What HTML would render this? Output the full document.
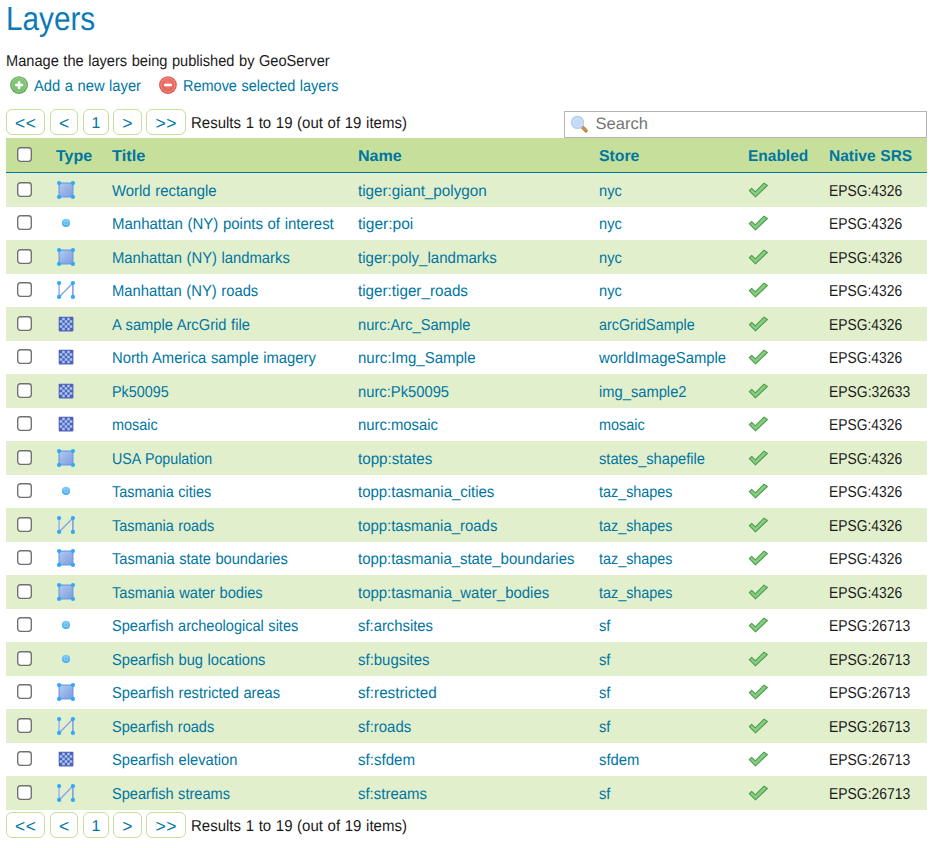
<!DOCTYPE html>
<html><head><meta charset="utf-8"><title>Layers</title>
<style>
html,body{margin:0;padding:0;background:#fff;}
body{width:938px;height:848px;position:relative;overflow:hidden;font-family:"Liberation Sans",sans-serif;font-size:15.8px;color:#222;text-rendering:geometricPrecision;}
.t{position:absolute;white-space:nowrap;line-height:20px;height:20px;transform-origin:0 50%;word-spacing:0.5px;}
.h1{font-size:33.3px;line-height:40px;height:40px;color:#0b7ab6;}
.lnk{color:#0076a1;}
.blk{color:#1a1a1a;}
.th{font-weight:bold;color:#0076a1;}
.bg{position:absolute;left:6px;width:921px;}
.hd{background:#c6e09b;top:138px;height:34px;}
.hl{background:#0076a1;top:172px;height:1px;}
.ev{background:#e2efcd;}
.cb{position:absolute;left:17px;width:15px;height:15px;}
.ic{position:absolute;overflow:visible;}
.pg{position:absolute;box-sizing:border-box;height:26px;border:1px solid #c6e09b;border-radius:6px;background:#fff;color:#0076a1;text-align:center;line-height:23px;font-size:15px;white-space:nowrap;}
.pg span{position:relative;display:inline-block;}
.pg .a1,.pg .a2{font-size:17.5px;top:1.7px;}
.pg .a2{letter-spacing:0.7px;left:0.35px;}
.pg .n{font-size:15.8px;top:1.6px;}
.sb{position:absolute;box-sizing:border-box;left:564px;top:111px;width:363px;height:27px;border:1px solid #b4b4b4;background:#fff;}
.ph{color:#757575;font-size:16.5px;word-spacing:0;}
</style></head><body>


<svg width="0" height="0" style="position:absolute">
 <defs>
  <linearGradient id="gpoly" x1="0" y1="0" x2="1" y2="1">
   <stop offset="0" stop-color="#b0cbef"/><stop offset="1" stop-color="#7c9ce0"/>
  </linearGradient>
  <linearGradient id="gpt" x1="0" y1="0" x2="0" y2="1">
   <stop offset="0" stop-color="#84cdf9"/><stop offset="0.5" stop-color="#56b7f5"/><stop offset="1" stop-color="#3ea9ef"/>
  </linearGradient>
  <radialGradient id="gadd" cx="0.5" cy="0.45" r="0.5">
   <stop offset="0" stop-color="#8fce86"/><stop offset="0.7" stop-color="#7cc070"/><stop offset="1" stop-color="#5aa850"/>
  </radialGradient>
  <radialGradient id="grem" cx="0.5" cy="0.45" r="0.5">
   <stop offset="0" stop-color="#f08078"/><stop offset="0.7" stop-color="#e8645a"/><stop offset="1" stop-color="#d8584e"/>
  </radialGradient>
  <g id="i-poly">
   <rect x="2.1" y="2.1" width="13.8" height="13.8" fill="url(#gpoly)" stroke="#7296de" stroke-width="1.2"/>
   <circle cx="2.1" cy="2.1" r="2.15" fill="#2faaf8"/><circle cx="15.9" cy="2.1" r="2.15" fill="#2faaf8"/>
   <circle cx="2.1" cy="15.9" r="2.15" fill="#2faaf8"/><circle cx="15.9" cy="15.9" r="2.15" fill="#2faaf8"/>
  </g>
  <g id="i-line">
   <path d="M2.1 2.1V15.9" fill="none" stroke="#9fb7ec" stroke-width="1.6"/><path d="M2.1 15.9L15.9 2.1" fill="none" stroke="#8aa5e6" stroke-width="1.45"/><path d="M15.9 2.1V15.9" fill="none" stroke="#819fe3" stroke-width="1.6"/>
   <circle cx="2.1" cy="2.1" r="2.15" fill="#2faaf8"/><circle cx="15.9" cy="2.1" r="2.15" fill="#2faaf8"/>
   <circle cx="2.1" cy="15.9" r="2.15" fill="#2faaf8"/><circle cx="15.9" cy="15.9" r="2.15" fill="#2faaf8"/>
  </g>
  <g id="i-point">
   <circle cx="9" cy="8.9" r="4.05" fill="url(#gpt)"/><rect x="7.2" y="7.1" width="3.6" height="3.6" rx="0.9" fill="#5fb8f5" stroke="#a3d7fb" stroke-width="0.8"/>
  </g>
  <g id="i-raster">
   <rect x="1.7" y="1.7" width="14.7" height="14.7" rx="0.8" fill="#4f61bb"/>
   <g fill="#a9c8f1">
    <rect x="5.25" y="2.75" width="2.5" height="2.5"/><rect x="10.25" y="2.75" width="2.5" height="2.5"/>
    <rect x="2.75" y="5.25" width="2.5" height="2.5"/><rect x="7.75" y="5.25" width="2.5" height="2.5"/><rect x="12.75" y="5.25" width="2.5" height="2.5"/>
    <rect x="5.25" y="7.75" width="2.5" height="2.5"/><rect x="10.25" y="7.75" width="2.5" height="2.5"/>
    <rect x="2.75" y="10.25" width="2.5" height="2.5"/><rect x="7.75" y="10.25" width="2.5" height="2.5"/><rect x="12.75" y="10.25" width="2.5" height="2.5"/>
    <rect x="5.25" y="12.75" width="2.5" height="2.5"/><rect x="10.25" y="12.75" width="2.5" height="2.5"/>
   </g>
  </g>
  <g id="i-check">
   <path d="M1.3 9.6L3.7 7.4L7.3 10.9L16 2.1L19.4 4.5L7.5 15.9Z" fill="#ffffff" opacity="0.5" transform="translate(0.5,0.8)"/>
   <path d="M1.3 9.6L3.7 7.4L7.3 10.9L16 2.1L19.4 4.5L7.5 15.9Z" fill="#82ca7e" stroke="#4d9d4a" stroke-width="1.05" stroke-linejoin="round"/>
   <path d="M3.6 9.4L7.4 13.1L16.6 3.9" fill="none" stroke="#93d48f" stroke-width="0.9" opacity="0.8"/>
  </g>
 </defs>
</svg>

<span class="t h1" style="left:6px;top:-0.5px;transform:scaleX(0.8924);">Layers</span>
<span class="t blk" style="left:5.6px;top:51.7px;transform:scaleX(0.9250);">Manage the layers being published by GeoServer</span>
<svg class="ic" style="left:10px;top:76px" width="18" height="18" viewBox="0 0 18 18"><circle cx="9.05" cy="9.05" r="8.9" fill="url(#gadd)"/><circle cx="9.05" cy="9.05" r="7" fill="none" stroke="#b3e0ac" stroke-width="0.8" opacity="0.75"/><path d="M9.1 6.2V12M6.2 9.1H12" stroke="#fff" stroke-width="2.5" stroke-linecap="round"/></svg>
<span class="t lnk" style="left:34.4px;top:76.6px;transform:scaleX(0.9323);">Add a new layer</span>
<svg class="ic" style="left:159px;top:76px" width="18" height="18" viewBox="0 0 18 18"><circle cx="8.95" cy="9.05" r="8.9" fill="url(#grem)"/><circle cx="8.95" cy="9.05" r="7" fill="none" stroke="#f8b8b0" stroke-width="0.8" opacity="0.75"/><path d="M6.1 9.1H11.9" stroke="#fff" stroke-width="2.5" stroke-linecap="round"/></svg>
<span class="t lnk" style="left:183px;top:76.6px;transform:scaleX(0.9168);">Remove selected layers</span>
<div class="pg" style="left:6px;top:109px;width:39px"><span class="a2">&lt;&lt;</span></div><div class="pg" style="left:50px;top:109px;width:28px"><span class="a1">&lt;</span></div><div class="pg" style="left:83px;top:109px;width:26px"><span class="n">1</span></div><div class="pg" style="left:113px;top:109px;width:28.5px"><span class="a1">&gt;</span></div><div class="pg" style="left:146px;top:109px;width:40px"><span class="a2">&gt;&gt;</span></div><span class="t blk" style="left:190.6px;top:114px;transform:scaleX(0.9495);">Results 1 to 19 (out of 19 items)</span>
<div class="sb"></div>
<svg class="ic" style="left:569px;top:114px" width="20" height="20" viewBox="0 0 20 20"><path d="M13.3 13.1L17 16.8" stroke="#b07a36" stroke-width="3.5" stroke-linecap="round"/><path d="M13.3 13.1L17 16.8" stroke="#cf9c60" stroke-width="1.6" stroke-linecap="round"/><circle cx="8.5" cy="8.45" r="6" fill="#c3d9f5" stroke="#b2ccf0" stroke-width="1.3"/><circle cx="8.5" cy="8.45" r="4.3" fill="none" stroke="#d6e6f9" stroke-width="0.9"/></svg>
<span class="t ph" style="left:595.6px;top:113.5px;">Search</span>
<div class="bg hd"></div><div class="bg hl"></div>
<svg class="cb" style="top:147px" viewBox="0 0 15 15"><rect x="0.7" y="0.7" width="13.6" height="13.6" rx="2.7" fill="#fff" stroke="#707070" stroke-width="1.35"/></svg>
<span class="t th" style="left:56px;top:146.8px;transform:scaleX(1.0139);">Type</span>
<span class="t th" style="left:112px;top:146.8px;transform:scaleX(1.0372);">Title</span>
<span class="t th" style="left:358px;top:146.8px;transform:scaleX(1.0179);">Name</span>
<span class="t th" style="left:599px;top:146.8px;transform:scaleX(1.0002);">Store</span>
<span class="t th" style="left:748px;top:146.8px;transform:scaleX(0.9796);">Enabled</span>
<span class="t th" style="left:829px;top:146.8px;transform:scaleX(0.9812);">Native SRS</span>
<div class="bg ev" style="top:173px;height:34px"></div>
<svg class="cb" style="top:182px" viewBox="0 0 15 15"><rect x="0.7" y="0.7" width="13.6" height="13.6" rx="2.7" fill="#fff" stroke="#707070" stroke-width="1.35"/></svg>
<svg class="ic" style="left:57px;top:181px" width="18" height="18" viewBox="0 0 18 18"><use href="#i-poly"/></svg>
<span class="t lnk" style="left:112px;top:182px;transform:scaleX(0.9435);">World rectangle</span>
<span class="t lnk" style="left:358px;top:182px;transform:scaleX(0.9638);">tiger:giant_polygon</span>
<span class="t lnk" style="left:599px;top:182px;transform:scaleX(0.9252);">nyc</span>
<svg class="ic" style="left:748px;top:181px" width="21" height="18" viewBox="0 0 21 18"><use href="#i-check"/></svg>
<span class="t blk" style="left:829px;top:182px;transform:scaleX(0.8762);">EPSG:4326</span>
<svg class="cb" style="top:215px" viewBox="0 0 15 15"><rect x="0.7" y="0.7" width="13.6" height="13.6" rx="2.7" fill="#fff" stroke="#707070" stroke-width="1.35"/></svg>
<svg class="ic" style="left:57px;top:214px" width="18" height="18" viewBox="0 0 18 18"><use href="#i-point"/></svg>
<span class="t lnk" style="left:112px;top:215px;transform:scaleX(0.9486);">Manhattan (NY) points of interest</span>
<span class="t lnk" style="left:358px;top:215px;transform:scaleX(0.9824);">tiger:poi</span>
<span class="t lnk" style="left:599px;top:215px;transform:scaleX(0.9252);">nyc</span>
<svg class="ic" style="left:748px;top:214px" width="21" height="18" viewBox="0 0 21 18"><use href="#i-check"/></svg>
<span class="t blk" style="left:829px;top:215px;transform:scaleX(0.8762);">EPSG:4326</span>
<div class="bg ev" style="top:240px;height:34px"></div>
<svg class="cb" style="top:249px" viewBox="0 0 15 15"><rect x="0.7" y="0.7" width="13.6" height="13.6" rx="2.7" fill="#fff" stroke="#707070" stroke-width="1.35"/></svg>
<svg class="ic" style="left:57px;top:248px" width="18" height="18" viewBox="0 0 18 18"><use href="#i-poly"/></svg>
<span class="t lnk" style="left:112px;top:249px;transform:scaleX(0.9372);">Manhattan (NY) landmarks</span>
<span class="t lnk" style="left:358px;top:249px;transform:scaleX(0.9528);">tiger:poly_landmarks</span>
<span class="t lnk" style="left:599px;top:249px;transform:scaleX(0.9252);">nyc</span>
<svg class="ic" style="left:748px;top:248px" width="21" height="18" viewBox="0 0 21 18"><use href="#i-check"/></svg>
<span class="t blk" style="left:829px;top:249px;transform:scaleX(0.8762);">EPSG:4326</span>
<svg class="cb" style="top:282px" viewBox="0 0 15 15"><rect x="0.7" y="0.7" width="13.6" height="13.6" rx="2.7" fill="#fff" stroke="#707070" stroke-width="1.35"/></svg>
<svg class="ic" style="left:57px;top:281px" width="18" height="18" viewBox="0 0 18 18"><use href="#i-line"/></svg>
<span class="t lnk" style="left:112px;top:282px;transform:scaleX(0.9350);">Manhattan (NY) roads</span>
<span class="t lnk" style="left:358px;top:282px;transform:scaleX(0.9633);">tiger:tiger_roads</span>
<span class="t lnk" style="left:599px;top:282px;transform:scaleX(0.9252);">nyc</span>
<svg class="ic" style="left:748px;top:281px" width="21" height="18" viewBox="0 0 21 18"><use href="#i-check"/></svg>
<span class="t blk" style="left:829px;top:282px;transform:scaleX(0.8762);">EPSG:4326</span>
<div class="bg ev" style="top:307px;height:34px"></div>
<svg class="cb" style="top:316px" viewBox="0 0 15 15"><rect x="0.7" y="0.7" width="13.6" height="13.6" rx="2.7" fill="#fff" stroke="#707070" stroke-width="1.35"/></svg>
<svg class="ic" style="left:57px;top:315px" width="18" height="18" viewBox="0 0 18 18"><use href="#i-raster"/></svg>
<span class="t lnk" style="left:112px;top:316px;transform:scaleX(0.9306);">A sample ArcGrid file</span>
<span class="t lnk" style="left:358px;top:316px;transform:scaleX(0.9269);">nurc:Arc_Sample</span>
<span class="t lnk" style="left:599px;top:316px;transform:scaleX(0.9090);">arcGridSample</span>
<svg class="ic" style="left:748px;top:315px" width="21" height="18" viewBox="0 0 21 18"><use href="#i-check"/></svg>
<span class="t blk" style="left:829px;top:316px;transform:scaleX(0.8762);">EPSG:4326</span>
<svg class="cb" style="top:349px" viewBox="0 0 15 15"><rect x="0.7" y="0.7" width="13.6" height="13.6" rx="2.7" fill="#fff" stroke="#707070" stroke-width="1.35"/></svg>
<svg class="ic" style="left:57px;top:348px" width="18" height="18" viewBox="0 0 18 18"><use href="#i-raster"/></svg>
<span class="t lnk" style="left:112px;top:349px;transform:scaleX(0.9375);">North America sample imagery</span>
<span class="t lnk" style="left:358px;top:349px;transform:scaleX(0.9490);">nurc:Img_Sample</span>
<span class="t lnk" style="left:599px;top:349px;transform:scaleX(0.9400);">worldImageSample</span>
<svg class="ic" style="left:748px;top:348px" width="21" height="18" viewBox="0 0 21 18"><use href="#i-check"/></svg>
<span class="t blk" style="left:829px;top:349px;transform:scaleX(0.8762);">EPSG:4326</span>
<div class="bg ev" style="top:374px;height:34px"></div>
<svg class="cb" style="top:383px" viewBox="0 0 15 15"><rect x="0.7" y="0.7" width="13.6" height="13.6" rx="2.7" fill="#fff" stroke="#707070" stroke-width="1.35"/></svg>
<svg class="ic" style="left:57px;top:382px" width="18" height="18" viewBox="0 0 18 18"><use href="#i-raster"/></svg>
<span class="t lnk" style="left:112px;top:383px;transform:scaleX(0.9088);">Pk50095</span>
<span class="t lnk" style="left:358px;top:383px;transform:scaleX(0.9340);">nurc:Pk50095</span>
<span class="t lnk" style="left:599px;top:383px;transform:scaleX(0.9313);">img_sample2</span>
<svg class="ic" style="left:748px;top:382px" width="21" height="18" viewBox="0 0 21 18"><use href="#i-check"/></svg>
<span class="t blk" style="left:829px;top:383px;transform:scaleX(0.8816);">EPSG:32633</span>
<svg class="cb" style="top:416px" viewBox="0 0 15 15"><rect x="0.7" y="0.7" width="13.6" height="13.6" rx="2.7" fill="#fff" stroke="#707070" stroke-width="1.35"/></svg>
<svg class="ic" style="left:57px;top:415px" width="18" height="18" viewBox="0 0 18 18"><use href="#i-raster"/></svg>
<span class="t lnk" style="left:112px;top:416px;transform:scaleX(0.9123);">mosaic</span>
<span class="t lnk" style="left:358px;top:416px;transform:scaleX(0.9397);">nurc:mosaic</span>
<span class="t lnk" style="left:599px;top:416px;transform:scaleX(0.9123);">mosaic</span>
<svg class="ic" style="left:748px;top:415px" width="21" height="18" viewBox="0 0 21 18"><use href="#i-check"/></svg>
<span class="t blk" style="left:829px;top:416px;transform:scaleX(0.8762);">EPSG:4326</span>
<div class="bg ev" style="top:441px;height:34px"></div>
<svg class="cb" style="top:450px" viewBox="0 0 15 15"><rect x="0.7" y="0.7" width="13.6" height="13.6" rx="2.7" fill="#fff" stroke="#707070" stroke-width="1.35"/></svg>
<svg class="ic" style="left:57px;top:449px" width="18" height="18" viewBox="0 0 18 18"><use href="#i-poly"/></svg>
<span class="t lnk" style="left:112px;top:450px;transform:scaleX(0.9017);">USA Population</span>
<span class="t lnk" style="left:358px;top:450px;transform:scaleX(0.9604);">topp:states</span>
<span class="t lnk" style="left:599px;top:450px;transform:scaleX(0.9285);">states_shapefile</span>
<svg class="ic" style="left:748px;top:449px" width="21" height="18" viewBox="0 0 21 18"><use href="#i-check"/></svg>
<span class="t blk" style="left:829px;top:450px;transform:scaleX(0.8762);">EPSG:4326</span>
<svg class="cb" style="top:483px" viewBox="0 0 15 15"><rect x="0.7" y="0.7" width="13.6" height="13.6" rx="2.7" fill="#fff" stroke="#707070" stroke-width="1.35"/></svg>
<svg class="ic" style="left:57px;top:482px" width="18" height="18" viewBox="0 0 18 18"><use href="#i-point"/></svg>
<span class="t lnk" style="left:112px;top:483px;transform:scaleX(0.9147);">Tasmania cities</span>
<span class="t lnk" style="left:358px;top:483px;transform:scaleX(0.9468);">topp:tasmania_cities</span>
<span class="t lnk" style="left:599px;top:483px;transform:scaleX(0.9101);">taz_shapes</span>
<svg class="ic" style="left:748px;top:482px" width="21" height="18" viewBox="0 0 21 18"><use href="#i-check"/></svg>
<span class="t blk" style="left:829px;top:483px;transform:scaleX(0.8762);">EPSG:4326</span>
<div class="bg ev" style="top:508px;height:34px"></div>
<svg class="cb" style="top:517px" viewBox="0 0 15 15"><rect x="0.7" y="0.7" width="13.6" height="13.6" rx="2.7" fill="#fff" stroke="#707070" stroke-width="1.35"/></svg>
<svg class="ic" style="left:57px;top:516px" width="18" height="18" viewBox="0 0 18 18"><use href="#i-line"/></svg>
<span class="t lnk" style="left:112px;top:517px;transform:scaleX(0.9131);">Tasmania roads</span>
<span class="t lnk" style="left:358px;top:517px;transform:scaleX(0.9446);">topp:tasmania_roads</span>
<span class="t lnk" style="left:599px;top:517px;transform:scaleX(0.9101);">taz_shapes</span>
<svg class="ic" style="left:748px;top:516px" width="21" height="18" viewBox="0 0 21 18"><use href="#i-check"/></svg>
<span class="t blk" style="left:829px;top:517px;transform:scaleX(0.8762);">EPSG:4326</span>
<svg class="cb" style="top:550px" viewBox="0 0 15 15"><rect x="0.7" y="0.7" width="13.6" height="13.6" rx="2.7" fill="#fff" stroke="#707070" stroke-width="1.35"/></svg>
<svg class="ic" style="left:57px;top:549px" width="18" height="18" viewBox="0 0 18 18"><use href="#i-poly"/></svg>
<span class="t lnk" style="left:112px;top:550px;transform:scaleX(0.9262);">Tasmania state boundaries</span>
<span class="t lnk" style="left:358px;top:550px;transform:scaleX(0.9441);">topp:tasmania_state_boundaries</span>
<span class="t lnk" style="left:599px;top:550px;transform:scaleX(0.9101);">taz_shapes</span>
<svg class="ic" style="left:748px;top:549px" width="21" height="18" viewBox="0 0 21 18"><use href="#i-check"/></svg>
<span class="t blk" style="left:829px;top:550px;transform:scaleX(0.8762);">EPSG:4326</span>
<div class="bg ev" style="top:575px;height:34px"></div>
<svg class="cb" style="top:584px" viewBox="0 0 15 15"><rect x="0.7" y="0.7" width="13.6" height="13.6" rx="2.7" fill="#fff" stroke="#707070" stroke-width="1.35"/></svg>
<svg class="ic" style="left:57px;top:583px" width="18" height="18" viewBox="0 0 18 18"><use href="#i-poly"/></svg>
<span class="t lnk" style="left:112px;top:584px;transform:scaleX(0.9265);">Tasmania water bodies</span>
<span class="t lnk" style="left:358px;top:584px;transform:scaleX(0.9467);">topp:tasmania_water_bodies</span>
<span class="t lnk" style="left:599px;top:584px;transform:scaleX(0.9101);">taz_shapes</span>
<svg class="ic" style="left:748px;top:583px" width="21" height="18" viewBox="0 0 21 18"><use href="#i-check"/></svg>
<span class="t blk" style="left:829px;top:584px;transform:scaleX(0.8762);">EPSG:4326</span>
<svg class="cb" style="top:617px" viewBox="0 0 15 15"><rect x="0.7" y="0.7" width="13.6" height="13.6" rx="2.7" fill="#fff" stroke="#707070" stroke-width="1.35"/></svg>
<svg class="ic" style="left:57px;top:616px" width="18" height="18" viewBox="0 0 18 18"><use href="#i-point"/></svg>
<span class="t lnk" style="left:112px;top:617px;transform:scaleX(0.9219);">Spearfish archeological sites</span>
<span class="t lnk" style="left:358px;top:617px;transform:scaleX(0.9393);">sf:archsites</span>
<span class="t lnk" style="left:599px;top:617px;transform:scaleX(0.9319);">sf</span>
<svg class="ic" style="left:748px;top:616px" width="21" height="18" viewBox="0 0 21 18"><use href="#i-check"/></svg>
<span class="t blk" style="left:829px;top:617px;transform:scaleX(0.8816);">EPSG:26713</span>
<div class="bg ev" style="top:642px;height:34px"></div>
<svg class="cb" style="top:651px" viewBox="0 0 15 15"><rect x="0.7" y="0.7" width="13.6" height="13.6" rx="2.7" fill="#fff" stroke="#707070" stroke-width="1.35"/></svg>
<svg class="ic" style="left:57px;top:650px" width="18" height="18" viewBox="0 0 18 18"><use href="#i-point"/></svg>
<span class="t lnk" style="left:112px;top:651px;transform:scaleX(0.9288);">Spearfish bug locations</span>
<span class="t lnk" style="left:358px;top:651px;transform:scaleX(0.9461);">sf:bugsites</span>
<span class="t lnk" style="left:599px;top:651px;transform:scaleX(0.9319);">sf</span>
<svg class="ic" style="left:748px;top:650px" width="21" height="18" viewBox="0 0 21 18"><use href="#i-check"/></svg>
<span class="t blk" style="left:829px;top:651px;transform:scaleX(0.8816);">EPSG:26713</span>
<svg class="cb" style="top:684px" viewBox="0 0 15 15"><rect x="0.7" y="0.7" width="13.6" height="13.6" rx="2.7" fill="#fff" stroke="#707070" stroke-width="1.35"/></svg>
<svg class="ic" style="left:57px;top:683px" width="18" height="18" viewBox="0 0 18 18"><use href="#i-poly"/></svg>
<span class="t lnk" style="left:112px;top:684px;transform:scaleX(0.9289);">Spearfish restricted areas</span>
<span class="t lnk" style="left:358px;top:684px;transform:scaleX(0.9640);">sf:restricted</span>
<span class="t lnk" style="left:599px;top:684px;transform:scaleX(0.9319);">sf</span>
<svg class="ic" style="left:748px;top:683px" width="21" height="18" viewBox="0 0 21 18"><use href="#i-check"/></svg>
<span class="t blk" style="left:829px;top:684px;transform:scaleX(0.8816);">EPSG:26713</span>
<div class="bg ev" style="top:709px;height:34px"></div>
<svg class="cb" style="top:718px" viewBox="0 0 15 15"><rect x="0.7" y="0.7" width="13.6" height="13.6" rx="2.7" fill="#fff" stroke="#707070" stroke-width="1.35"/></svg>
<svg class="ic" style="left:57px;top:717px" width="18" height="18" viewBox="0 0 18 18"><use href="#i-line"/></svg>
<span class="t lnk" style="left:112px;top:718px;transform:scaleX(0.9194);">Spearfish roads</span>
<span class="t lnk" style="left:358px;top:718px;transform:scaleX(0.9461);">sf:roads</span>
<span class="t lnk" style="left:599px;top:718px;transform:scaleX(0.9319);">sf</span>
<svg class="ic" style="left:748px;top:717px" width="21" height="18" viewBox="0 0 21 18"><use href="#i-check"/></svg>
<span class="t blk" style="left:829px;top:718px;transform:scaleX(0.8816);">EPSG:26713</span>
<svg class="cb" style="top:751px" viewBox="0 0 15 15"><rect x="0.7" y="0.7" width="13.6" height="13.6" rx="2.7" fill="#fff" stroke="#707070" stroke-width="1.35"/></svg>
<svg class="ic" style="left:57px;top:750px" width="18" height="18" viewBox="0 0 18 18"><use href="#i-raster"/></svg>
<span class="t lnk" style="left:112px;top:751px;transform:scaleX(0.9291);">Spearfish elevation</span>
<span class="t lnk" style="left:358px;top:751px;transform:scaleX(0.9550);">sf:sfdem</span>
<span class="t lnk" style="left:599px;top:751px;transform:scaleX(0.9353);">sfdem</span>
<svg class="ic" style="left:748px;top:750px" width="21" height="18" viewBox="0 0 21 18"><use href="#i-check"/></svg>
<span class="t blk" style="left:829px;top:751px;transform:scaleX(0.8816);">EPSG:26713</span>
<div class="bg ev" style="top:776px;height:34px"></div>
<svg class="cb" style="top:785px" viewBox="0 0 15 15"><rect x="0.7" y="0.7" width="13.6" height="13.6" rx="2.7" fill="#fff" stroke="#707070" stroke-width="1.35"/></svg>
<svg class="ic" style="left:57px;top:784px" width="18" height="18" viewBox="0 0 18 18"><use href="#i-line"/></svg>
<span class="t lnk" style="left:112px;top:785px;transform:scaleX(0.9227);">Spearfish streams</span>
<span class="t lnk" style="left:358px;top:785px;transform:scaleX(0.9460);">sf:streams</span>
<span class="t lnk" style="left:599px;top:785px;transform:scaleX(0.9319);">sf</span>
<svg class="ic" style="left:748px;top:784px" width="21" height="18" viewBox="0 0 21 18"><use href="#i-check"/></svg>
<span class="t blk" style="left:829px;top:785px;transform:scaleX(0.8816);">EPSG:26713</span>
<div class="pg" style="left:6px;top:812px;width:39px"><span class="a2">&lt;&lt;</span></div><div class="pg" style="left:50px;top:812px;width:28px"><span class="a1">&lt;</span></div><div class="pg" style="left:83px;top:812px;width:26px"><span class="n">1</span></div><div class="pg" style="left:113px;top:812px;width:28.5px"><span class="a1">&gt;</span></div><div class="pg" style="left:146px;top:812px;width:40px"><span class="a2">&gt;&gt;</span></div><span class="t blk" style="left:190.6px;top:817px;transform:scaleX(0.9495);">Results 1 to 19 (out of 19 items)</span>
</body></html>
